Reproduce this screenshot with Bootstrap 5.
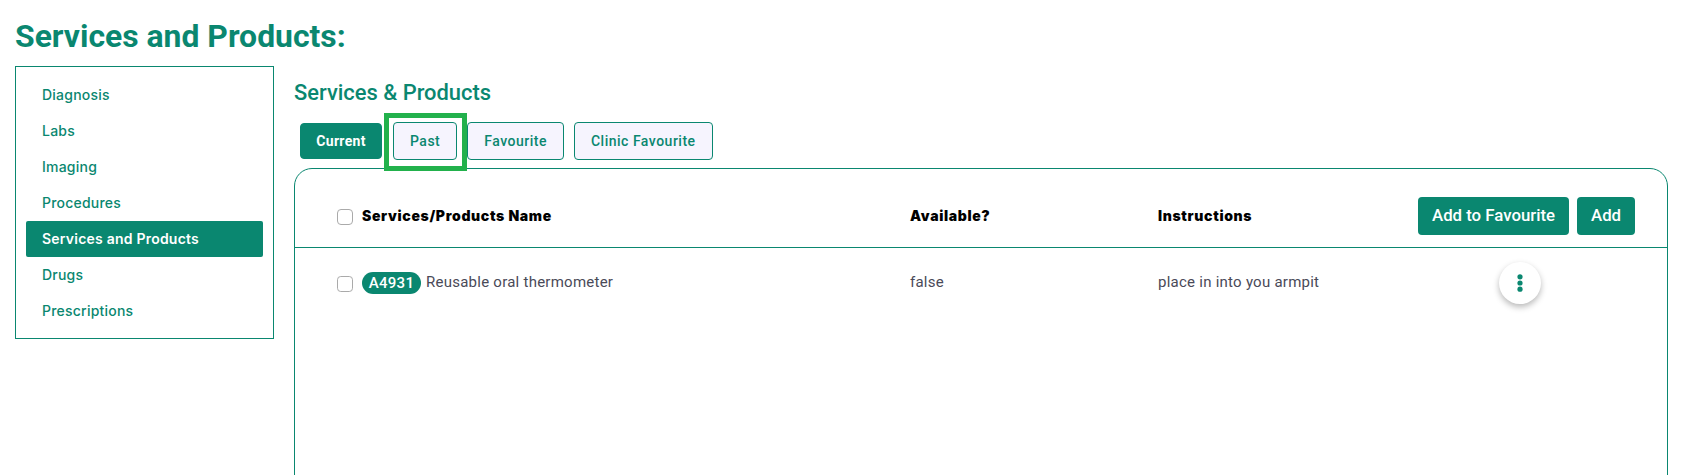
<!DOCTYPE html>
<html lang="en">

<head>
    <meta charset="UTF-8">
    <title>Services and Products</title>
    <link href="https://cdn.jsdelivr.net/npm/bootstrap@5.3.0/dist/css/bootstrap.min.css" rel="stylesheet">
    <style>
        html, body { height: 100%; overflow: hidden; }
        body {
            background: #fff;
            font-family: "Roboto", "Liberation Sans", sans-serif;
            color: #4a4a58;
        }

        .page-wrap { padding: 16px 18px 0 15px; }

        .page-title {
            color: #0a8770;
            font-size: 31.9px;
            font-weight: 700;
            line-height: 40px;
            margin: 0 0 10px;
        }

        .side-menu {
            width: 259px;
            height: 273px;
            flex: none;
            border: 1px solid #0a8770;
            padding: 10px;
            margin-right: 20px;
        }

        .side-menu a {
            display: block;
            height: 36px;
            line-height: 36px;
            padding-left: 16px;
            border-radius: 2px;
            color: #0a8770;
            font-family: "Inter", sans-serif;
            font-size: 14px;
            font-weight: 500;
            letter-spacing: .22px;
            text-decoration: none;
        }

        .side-menu a.on { background: #0a8770; color: #fff; font-weight: 600; }

        .sub-title {
            color: #0a8770;
            font-size: 21.9px;
            font-weight: 500;
            line-height: 28px;
            margin: 13px 0 15px;
        }

        .tab-row { padding-left: 6px; height: 46px; align-items: flex-start; position: relative; }

        .tab-btn {
            height: 38px;
            margin-right: 10px;
            padding: 0 16px;
            background: #f6f4fe;
            border: 1px solid #0a8770;
            border-radius: 4px;
            color: #0a8770;
            font-size: 14px;
            font-weight: 500;
            letter-spacing: .5px;
        }

        .tab-btn.on {
            background: #0a8770;
            color: #fff;
            font-weight: 700;
            width: 82px;
            padding: 0;
            height: 36px;
            margin-top: 1px;
            margin-right: 11px;
            letter-spacing: .3px;
        }

        .tab-mark {
            position: absolute;
            left: 90px;
            top: -9px;
            width: 83px;
            height: 58px;
            border: 5px solid #22b14c;
            pointer-events: none;
        }

        .list-box {
            height: 400px;
            border: 1px solid #0a8770;
            border-radius: 18px;
        }

        .list-grid {
            display: grid;
            grid-template-columns: 573px 248px 260px 1fr;
            padding-left: 42px;
            align-items: center;
        }

        .list-head { height: 79px; border-bottom: 1px solid #0a8770; padding-top: 15px; }
        .list-line { padding-top: 13px; font-size: 15px; letter-spacing: .25px; }

        .head-cell {
            color: #000;
            font-family: "Inter", sans-serif;
            font-size: 14px;
            font-weight: 900;
            letter-spacing: .65px;
        }

        .tick {
            width: 16px;
            height: 16px;
            margin: 3px 9px 0 0;
            flex: none;
            border-color: #aaa;
        }

        .code-pill {
            background: #0a8770;
            color: #fff;
            border-radius: 11px;
            width: 59px;
            height: 22px;
            line-height: 22px;
            text-align: center;
            font-size: 15px;
            font-weight: 500;
            letter-spacing: .3px;
            margin-right: 5px;
        }

        .act-btn {
            height: 38px;
            padding: 0 14px;
            background: #0a8770;
            border: 0;
            border-radius: 4px;
            color: #fff;
            font-size: 16.8px;
            font-weight: 500;
        }

        .dots-btn {
            width: 42px;
            height: 42px;
            margin-left: 81px;
            margin-top: 1px;
            border: 0;
            border-radius: 50%;
            background: #fff;
            box-shadow: 0 3px 6px rgba(0, 0, 0, .28);
        }
    </style>
</head>

<body>
    <div class="page-wrap">
        <h1 class="page-title">Services and Products:</h1>
        <div class="d-flex">
            <nav class="side-menu">
                <a href="#">Diagnosis</a>
                <a href="#">Labs</a>
                <a href="#">Imaging</a>
                <a href="#">Procedures</a>
                <a href="#" class="on">Services and Products</a>
                <a href="#">Drugs</a>
                <a href="#">Prescriptions</a>
            </nav>
            <div class="flex-grow-1">
                <h2 class="sub-title">Services &amp; Products</h2>
                <div class="d-flex tab-row">
                    <button class="tab-btn on">Current</button>
                    <button class="tab-btn">Past</button>
                    <button class="tab-btn">Favourite</button>
                    <button class="tab-btn">Clinic Favourite</button>
                    <div class="tab-mark"></div>
                </div>
                <div class="list-box">
                    <div class="list-grid list-head">
                        <div class="d-flex align-items-center">
                            <input class="form-check-input tick" type="checkbox">
                            <span class="head-cell">Services/Products Name</span>
                        </div>
                        <div class="head-cell">Available?</div>
                        <div class="head-cell">Instructions</div>
                        <div class="d-flex gap-2">
                            <button class="act-btn">Add to Favourite</button>
                            <button class="act-btn">Add</button>
                        </div>
                    </div>
                    <div class="list-grid list-line">
                        <div class="d-flex align-items-center">
                            <input class="form-check-input tick" type="checkbox">
                            <span class="code-pill">A4931</span>
                            <span>Reusable oral thermometer</span>
                        </div>
                        <div>false</div>
                        <div>place in into you armpit</div>
                        <div>
                            <button class="dots-btn d-flex align-items-center justify-content-center" aria-label="More">
                                <svg width="6" height="18" viewBox="0 0 6 18" fill="#0a8770">
                                    <circle cx="3" cy="2.8" r="2.6"/>
                                    <circle cx="3" cy="9" r="2.6"/>
                                    <circle cx="3" cy="15.2" r="2.6"/>
                                </svg>
                            </button>
                        </div>
                    </div>
                </div>
            </div>
        </div>
    </div>
    <script src="https://cdn.jsdelivr.net/npm/bootstrap@5.3.0/dist/js/bootstrap.bundle.min.js"></script>
</body>

</html>
